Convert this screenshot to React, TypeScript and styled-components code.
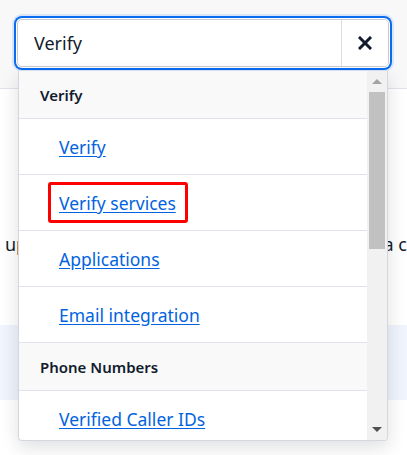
import { FC } from 'react';
import styled, { createGlobalStyle } from 'styled-components';

const GlobalStyle = createGlobalStyle`
  html, body {
    margin: 0;
    padding: 0;
    background: #ffffff;
  }
  body {
    font-family: 'Noto Sans', 'Open Sans', sans-serif;
    color: #121c2d;
  }
`;

type Item = { kind: 'group' | 'link'; label: string; marked?: boolean };

const items: Item[] = [
  { kind: 'group', label: 'Verify' },
  { kind: 'link', label: 'Verify' },
  { kind: 'link', label: 'Verify services', marked: true },
  { kind: 'link', label: 'Applications' },
  { kind: 'link', label: 'Email integration' },
  { kind: 'group', label: 'Phone Numbers' },
  { kind: 'link', label: 'Verified Caller IDs' },
];

const App: FC = () => (
  <>
    <GlobalStyle />
    <Page>
      <TopBar />
      <Content>
        <TextLine>
          <span>up</span>
          <span>a c</span>
        </TextLine>
        <Band />
      </Content>

      <Combobox>
        <Field>
          <Input defaultValue="Verify" />
          <ClearButton aria-label="Clear">
            <svg width="14" height="14" viewBox="0 0 14 14">
              <path d="M2 2 L12 12 M12 2 L2 12" stroke="#121c2d" strokeWidth="3" strokeLinecap="square" />
            </svg>
          </ClearButton>
        </Field>

        <Listbox>
          <Options>
            {items.map((item, i) =>
              item.kind === 'group' ? (
                <GroupRow key={i}>{item.label}</GroupRow>
              ) : (
                <LinkRow key={i}>
                  <Highlight marked={item.marked}>
                    <OptionLink href="#">{item.label}</OptionLink>
                  </Highlight>
                </LinkRow>
              )
            )}
          </Options>
          <Scrollbar>
            <ArrowButton>
              <Arrow up />
            </ArrowButton>
            <Thumb />
            <Track />
            <ArrowButton>
              <Arrow />
            </ArrowButton>
          </Scrollbar>
        </Listbox>
      </Combobox>
    </Page>
  </>
);

export default App;

const Page = styled.div`
  position: relative;
  width: 407px;
  height: 455px;
  overflow: hidden;
  background: #ffffff;
`;

const TopBar = styled.header`
  height: 88px;
  background: #f8f8f9;
  border-bottom: 1px solid #e1e3ea;
`;

const Content = styled.main`
  display: flex;
  flex-direction: column;
`;

const TextLine = styled.p`
  margin: 141px 0 0;
  padding-left: 5px;
  display: flex;
  justify-content: space-between;
  font-size: 18px;
  line-height: 28px;
  color: #121c2d;
  white-space: nowrap;
`;

const Band = styled.div`
  margin-top: 67px;
  height: 75px;
  background: #eff4fd;
`;

const Combobox = styled.div`
  position: absolute;
  top: 19px;
  left: 17px;
  width: 372px;
`;

const Field = styled.div`
  display: flex;
  height: 46px;
  border: 1px solid #c9ccd4;
  border-radius: 5px;
  background: #ffffff;
  box-shadow: 0 0 0 1px #ffffff, 0 0 0 3px #0b6cf0, 0 0 0 5px rgba(11, 108, 240, 0.12);
  overflow: hidden;
`;

const Input = styled.input`
  flex: 1;
  min-width: 0;
  border: none;
  outline: none;
  padding: 0 0 0 16px;
  font-family: inherit;
  font-size: 18px;
  color: #121c2d;
  background: transparent;
`;

const ClearButton = styled.button`
  width: 47px;
  display: flex;
  align-items: center;
  justify-content: center;
  border: none;
  border-left: 1px solid #dcdde2;
  background: #ffffff;
  padding: 0;
  cursor: pointer;
`;

const Listbox = styled.div`
  display: flex;
  margin: 4px 0 0 1px;
  width: 368px;
  height: 369px;
  border: 1px solid #d6d7dd;
  border-top: none;
  border-radius: 0 0 4px 4px;
  background: #ffffff;
  box-shadow: 0 6px 18px rgba(18, 28, 45, 0.14);
  overflow: hidden;
`;

const Options = styled.ul`
  flex: 1;
  margin: 0;
  padding: 0;
  list-style: none;
  overflow: hidden;
`;

const GroupRow = styled.li`
  display: flex;
  align-items: center;
  height: 47px;
  padding-left: 21px;
  background: #f9f9fa;
  border-bottom: 1px solid #e1e3ea;
  font-size: 15px;
  font-weight: 600;
  color: #121c2d;
`;

const LinkRow = styled.li`
  display: flex;
  align-items: center;
  height: 55px;
  padding-left: 29px;
  border-bottom: 1px solid #e1e3ea;
`;

const Highlight = styled.span<{ marked?: boolean }>`
  display: inline-flex;
  align-items: center;
  height: 35px;
  padding: 0 9px 0 8px;
  border: 3px solid ${({ marked }) => (marked ? '#ff0000' : 'transparent')};
  border-radius: 3px;
`;

const OptionLink = styled.a`
  font-size: 17.5px;
  color: #0263e0;
  text-decoration: underline;
  text-underline-offset: 2px;
`;

const Scrollbar = styled.div`
  width: 20px;
  display: flex;
  flex-direction: column;
  background: #f1f1f1;
`;

const ArrowButton = styled.div`
  height: 21px;
  display: flex;
  align-items: center;
  justify-content: center;
`;

const Arrow = styled.span<{ up?: boolean }>`
  width: 0;
  height: 0;
  border-left: 5px solid transparent;
  border-right: 5px solid transparent;
  ${({ up }) => (up ? 'border-bottom: 5px solid #a3a3a3;' : 'border-top: 5px solid #505050;')}
`;

const Thumb = styled.div`
  height: 157px;
  margin: 0 2px;
  background: #c1c1c1;
`;

const Track = styled.div`
  flex: 1;
`;
